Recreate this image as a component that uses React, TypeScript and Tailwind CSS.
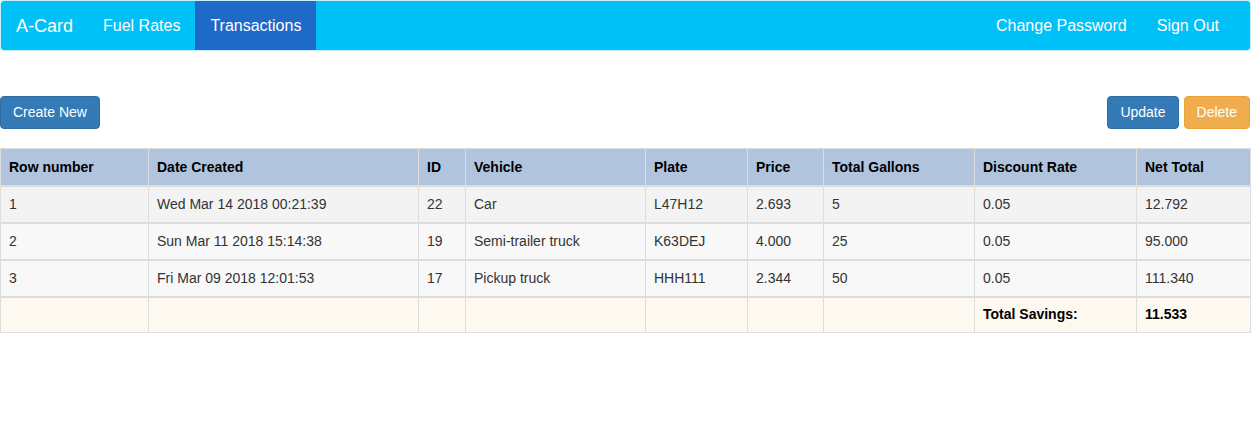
import React from 'react';

const columns = [
  { label: 'Row number', width: 'w-[148px]' },
  { label: 'Date Created', width: 'w-[270px]' },
  { label: 'ID', width: 'w-[47px]' },
  { label: 'Vehicle', width: 'w-[180px]' },
  { label: 'Plate', width: 'w-[102px]' },
  { label: 'Price', width: 'w-[76px]' },
  { label: 'Total Gallons', width: 'w-[151px]' },
  { label: 'Discount Rate', width: 'w-[162px]' },
  { label: 'Net Total', width: 'w-[114px]' },
];

const rows = [
  ['1', 'Wed Mar 14 2018 00:21:39', '22', 'Car', 'L47H12', '2.693', '5', '0.05', '12.792'],
  ['2', 'Sun Mar 11 2018 15:14:38', '19', 'Semi-trailer truck', 'K63DEJ', '4.000', '25', '0.05', '95.000'],
  ['3', 'Fri Mar 09 2018 12:01:53', '17', 'Pickup truck', 'HHH111', '2.344', '50', '0.05', '111.340'],
];

function Navbar() {
  return (
    <nav className="w-[1251px] rounded border border-[#c9eefb] bg-[#00c0f8] text-white">
      <div className="flex h-[49px] items-stretch justify-between">
        <div className="flex items-stretch">
          <a className="flex items-center px-[15px] pt-[1px] text-[18px]">A-Card</a>
          <a className="flex items-center px-[15px] pt-[1px] text-[16px]">Fuel Rates</a>
          <a className="flex items-center bg-[#1f69c9] px-[15px] pt-[1px] text-[16px]">Transactions</a>
        </div>
        <div className="mr-[16px] flex items-stretch">
          <a className="flex items-center px-[15px] pt-[1px] text-[16px]">Change Password</a>
          <a className="flex items-center px-[15px] pt-[1px] text-[16px]">Sign Out</a>
        </div>
      </div>
    </nav>
  );
}

export default function App() {
  return (
    <div className="min-h-[434px] bg-white text-[14px] text-[#333] [font-family:'Liberation_Sans',Arial,sans-serif]">
      <Navbar />

      <div className="w-[1250px]">
        <div className="mt-[45px] flex items-center justify-between">
          <button className="h-[33px] rounded border border-[#2e6da4] bg-[#337ab7] px-[12px] text-white">
            Create New
          </button>
          <div className="flex gap-[5px]">
            <button className="h-[33px] rounded border border-[#2e6da4] bg-[#337ab7] px-[12px] text-white">
              Update
            </button>
            <button className="h-[33px] rounded border border-[#eea236] bg-[#f0ad4e] px-[12px] text-white">
              Delete
            </button>
          </div>
        </div>

        <table className="mt-[19px] w-[1250px] table-fixed border-collapse border border-[#ddd]">
          <thead>
            <tr className="h-[37px] border-b-2 border-[#ddd] bg-[#b0c4de]">
              {columns.map((c) => (
                <th
                  key={c.label}
                  className={`${c.width} border-x border-[#ddd] px-[8px] pt-[2px] text-left font-bold text-black`}
                >
                  {c.label}
                </th>
              ))}
            </tr>
          </thead>
          <tbody>
            {rows.map((r, i) => (
              <tr
                key={r[0]}
                className={`h-[37px] border-b-2 border-[#ddd] ${i === 0 ? 'bg-[#f3f3f3]' : 'bg-[#f8f8f8]'}`}
              >
                {r.map((v, j) => (
                  <td key={j} className="border-x border-[#ddd] px-[8px]">
                    {v}
                  </td>
                ))}
              </tr>
            ))}
            <tr className="h-[36px] bg-[#fdf8f0]">
              {columns.map((c, j) => (
                <td key={c.label} className="border-x border-[#ddd] px-[8px] font-bold text-black">
                  {j === 7 ? 'Total Savings:' : j === 8 ? '11.533' : ''}
                </td>
              ))}
            </tr>
          </tbody>
        </table>
      </div>
    </div>
  );
}
